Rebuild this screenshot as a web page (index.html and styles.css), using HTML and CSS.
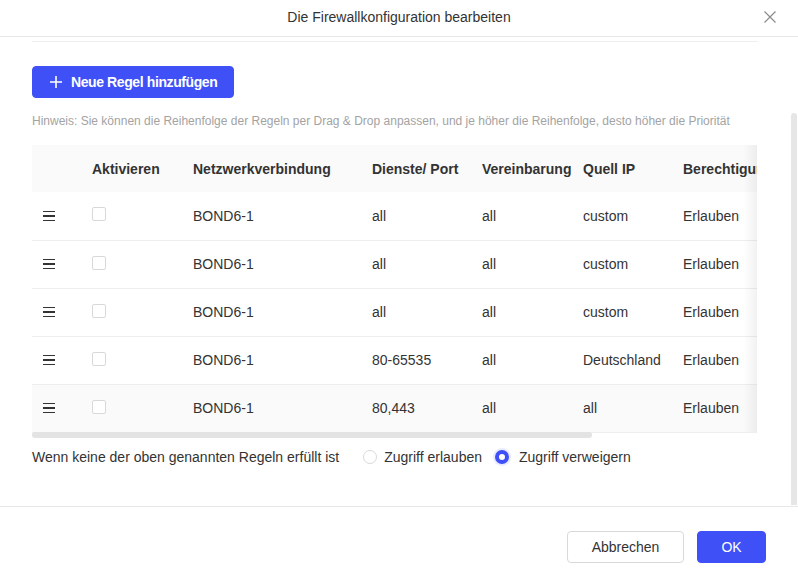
FILE: index.html
```html
<!DOCTYPE html>
<html lang="de">
<head>
<meta charset="utf-8">
<title>Die Firewallkonfiguration bearbeiten</title>
<link rel="stylesheet" href="styles.css">
</head>
<body>
<div class="modal">
  <header class="modal-header">
    <h1 class="modal-title">Die Firewallkonfiguration bearbeiten</h1>
    <button class="close-btn" aria-label="Schließen">
      <svg width="12" height="12" viewBox="0 0 12 12"><path d="M0.5 0.5L11.5 11.5M11.5 0.5L0.5 11.5" stroke="#8c8c8c" stroke-width="1.2" fill="none"/></svg>
    </button>
  </header>
  <div class="modal-body">
    <div class="body-content">
      <div class="prev-divider"></div>
      <button class="btn btn-primary btn-add">
        <svg width="12" height="12" viewBox="0 0 12 12"><path d="M6 0V12M0 6H12" stroke="#fff" stroke-width="1.6" fill="none"/></svg>
        <span>Neue Regel hinzufügen</span>
      </button>
      <p class="hint">Hinweis: Sie können die Reihenfolge der Regeln per Drag &amp; Drop anpassen, und je höher die Reihenfolge, desto höher die Priorität</p>
      <div class="table-wrap">
        <div class="table-clip">
          <table class="rules">
            <colgroup>
              <col class="c-drag"><col class="c-act"><col class="c-net"><col class="c-port"><col class="c-proto"><col class="c-ip"><col class="c-perm">
            </colgroup>
            <thead>
              <tr><th></th><th>Aktivieren</th><th>Netzwerkverbindung</th><th>Dienste/ Port</th><th>Vereinbarung</th><th>Quell IP</th><th>Berechtigung</th></tr>
            </thead>
            <tbody>
              <tr><td><span class="drag"><i></i><i></i><i></i></span></td><td><span class="checkbox"></span></td><td>BOND6-1</td><td>all</td><td>all</td><td>custom</td><td>Erlauben</td></tr>
              <tr><td><span class="drag"><i></i><i></i><i></i></span></td><td><span class="checkbox"></span></td><td>BOND6-1</td><td>all</td><td>all</td><td>custom</td><td>Erlauben</td></tr>
              <tr><td><span class="drag"><i></i><i></i><i></i></span></td><td><span class="checkbox"></span></td><td>BOND6-1</td><td>all</td><td>all</td><td>custom</td><td>Erlauben</td></tr>
              <tr><td><span class="drag"><i></i><i></i><i></i></span></td><td><span class="checkbox"></span></td><td>BOND6-1</td><td>80-65535</td><td>all</td><td>Deutschland</td><td>Erlauben</td></tr>
              <tr class="hover"><td><span class="drag"><i></i><i></i><i></i></span></td><td><span class="checkbox"></span></td><td>BOND6-1</td><td>80,443</td><td>all</td><td>all</td><td>Erlauben</td></tr>
            </tbody>
          </table>
        </div>
        <div class="hscroll"><div class="hthumb"></div></div>
        <div class="fix-shadow"></div>
      </div>
      <div class="default-rule">
        <span class="default-label">Wenn keine der oben genannten Regeln erfüllt ist</span>
        <label class="radio"><span class="radio-dot"></span>Zugriff erlauben</label>
        <label class="radio checked"><span class="radio-dot"></span>Zugriff verweigern</label>
      </div>
    </div>
    <div class="vthumb"></div>
  </div>
  <footer class="modal-footer">
    <button class="btn btn-default">Abbrechen</button>
    <button class="btn btn-primary btn-ok">OK</button>
  </footer>
</div>
</body>
</html>
```
FILE: styles.css
```css
* { box-sizing: border-box; }
html, body { margin: 0; padding: 0; background: #fff; }
body {
  font-family: "Liberation Sans", Arial, sans-serif;
  font-size: 14px;
  color: #333;
}
.modal {
  width: 798px;
  height: 585px;
  display: flex;
  flex-direction: column;
  background: #fff;
}
.modal-header {
  height: 37px;
  border-bottom: 1px solid #e8e8e8;
  display: flex;
  align-items: center;
  justify-content: center;
  position: relative;
  flex: none;
}
.modal-title {
  margin: 0;
  font-size: 14px;
  font-weight: normal;
  color: #333;
  line-height: 20px;
  padding-bottom: 2px;
}
.close-btn {
  position: absolute;
  right: 22px;
  top: 11px;
  width: 12px;
  height: 12px;
  padding: 0;
  border: 0;
  background: none;
  display: flex;
}
.modal-body {
  flex: 1;
  position: relative;
  overflow: hidden;
}
.body-content {
  padding: 0 40px 0 32px;
  display: flex;
  flex-direction: column;
  align-items: flex-start;
}
.prev-divider {
  align-self: stretch;
  height: 1px;
  margin-top: 4px;
  background: #efefef;
}
.btn {
  font-family: inherit;
  font-size: 14px;
  height: 32px;
  border-radius: 4px;
  cursor: pointer;
  display: inline-flex;
  align-items: center;
  justify-content: center;
  white-space: nowrap;
}
.btn-primary {
  background: #3e50f6;
  border: 1px solid #3e50f6;
  color: #fff;
}
.btn-add {
  margin-top: 24px;
  width: 202px;
  height: 32px;
  gap: 9px;
  font-weight: bold;
  padding: 0 10px 0 17px;
  justify-content: flex-start;
}
.btn-add span { letter-spacing: -0.4px; }
.hint {
  margin: 14px 0 0;
  font-size: 12px;
  line-height: 18px;
  color: #a3a3a3;
}
.table-wrap {
  margin-top: 15px;
  width: 725px;
  position: relative;
}
.table-clip {
  overflow: hidden;
  width: 725px;
}
.rules {
  border-collapse: collapse;
  table-layout: fixed;
  width: 800px;
}
.c-drag { width: 44px; }
.c-act { width: 101px; }
.c-net { width: 179px; }
.c-port { width: 110px; }
.c-proto { width: 101px; }
.c-ip { width: 100px; }
.c-perm { width: 165px; }
.rules th {
  background: #fafafa;
  height: 47px;
  text-align: left;
  font-weight: bold;
  color: #333;
  padding: 0 0 0 16px;
  white-space: nowrap;
}
.rules td {
  height: 48px;
  border-bottom: 1px solid #eeeeee;
  padding: 0 0 0 16px;
  color: #333;
  white-space: nowrap;
  vertical-align: middle;
}
.rules td:first-child { padding-left: 10px; }
.rules tr.hover td { background: #fafafa; }
.drag {
  display: flex;
  flex-direction: column;
  gap: 3px;
  width: 12px;
  margin-left: 1px;
}
.drag i {
  display: block;
  height: 1.5px;
  background: #333;
}
.checkbox {
  display: block;
  width: 14px;
  height: 14px;
  border: 1px solid #d9d9d9;
  border-radius: 2px;
  background: #fff;
  margin-bottom: 3px;
}
.hscroll {
  height: 6px;
  margin-top: -1px;
  position: relative;
}
.hthumb {
  width: 560px;
  height: 6px;
  border-radius: 3px;
  background: #e3e3e3;
}
.fix-shadow {
  position: absolute;
  right: 0;
  top: 0;
  bottom: 6px;
  width: 14px;
  background: linear-gradient(to right, rgba(0,0,0,0), rgba(0,0,0,0.055));
}
.default-rule {
  margin-top: 8px;
  display: flex;
  align-items: center;
  line-height: 22px;
  color: #333;
}
.default-label { margin-right: 24px; }
.radio {
  display: inline-flex;
  align-items: center;
  gap: 7px;
  margin-right: 13px;
}
.radio.checked { gap: 10px; }
.radio-dot {
  width: 14px;
  height: 14px;
  border-radius: 50%;
  border: 1px solid #d9d9d9;
  background: #fff;
}
.radio.checked .radio-dot {
  border: 4px solid #3e50f6;
  box-shadow: 0 0 0 2px rgba(62, 80, 246, 0.12);
}
.vthumb {
  position: absolute;
  right: 1px;
  top: 76px;
  bottom: 1px;
  width: 6px;
  border-radius: 3px 3px 0 0;
  background: #e6e6e6;
}
.modal-footer {
  flex: none;
  height: 79px;
  border-top: 1px solid #e8e8e8;
  display: flex;
  justify-content: flex-end;
  align-items: flex-start;
  padding: 24px 32px 0 0;
  gap: 13px;
}
.btn-default {
  width: 117px;
  background: #fff;
  border: 1px solid #d9d9d9;
  color: #333;
}
.btn-ok { width: 69px; }
```
